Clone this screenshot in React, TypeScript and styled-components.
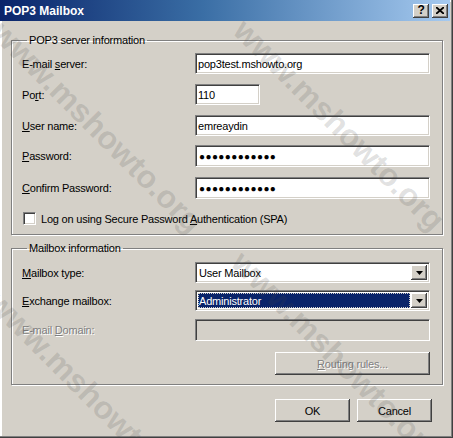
import React from 'react'
import styled, { createGlobalStyle, css } from 'styled-components'

const GlobalStyle = createGlobalStyle`
  html, body {
    margin: 0;
    padding: 0;
    background: #d4d0c8;
  }
  body {
    font-family: 'Liberation Sans', Arial, sans-serif;
    font-size: 11px;
    color: #000;
  }
`

const face = '#d4d0c8'
const shadow = '#808080'
const dark = '#404040'

const raised = css`
  background: ${face};
  border: 0;
  box-shadow: inset -1px -1px 0 ${dark}, inset 1px 1px 0 #fff, inset -2px -2px 0 ${shadow};
`

const sunken = css`
  box-sizing: border-box;
  border-top: 1px solid ${shadow};
  border-left: 1px solid ${shadow};
  border-right: 1px solid #fff;
  border-bottom: 1px solid #fff;
  box-shadow: inset 1px 1px 0 ${dark}, inset -1px -1px 0 ${face};
`

const Window = styled.div`
  position: relative;
  width: 453px;
  height: 438px;
  overflow: hidden;
  background: ${face};
  box-sizing: border-box;
  box-shadow: inset -1px -1px 0 ${dark}, inset -2px -2px 0 ${shadow}, inset 2px 2px 0 #fff;
  letter-spacing: -0.2px;
`

const TitleBar = styled.div`
  height: 21px;
  margin-right: 3px;
  padding: 0 2px 0 4px;
  display: flex;
  align-items: center;
  justify-content: space-between;
  background: linear-gradient(to right, #0a246a, #3a6ea5 45%, #a6caf0);
`

const Title = styled.span`
  color: #fff;
  font-weight: bold;
  font-size: 12px;
  letter-spacing: 0;
`

const CaptionButtons = styled.div`
  display: flex;
  gap: 3px;
`

const CaptionButton = styled.div`
  ${raised};
  width: 16px;
  height: 14px;
  display: flex;
  align-items: center;
  justify-content: center;
  font-weight: bold;
  font-size: 12px;
  line-height: 14px;
  padding-bottom: 1px;
  box-sizing: border-box;
`

const Body = styled.div`
  padding: 13px 10px 0 11px;
  display: flex;
  flex-direction: column;
`

const Group = styled.fieldset<{ $padTop: number; $padBottom: number }>`
  margin: 0 0 7px 0;
  width: 432px;
  box-sizing: border-box;
  border: 1px solid ${shadow};
  box-shadow: inset 1px 1px 0 #fff, 1px 1px 0 #fff;
  padding: ${p => p.$padTop}px 12px ${p => p.$padBottom}px 10px;
  min-width: 0;
`

const Legend = styled.legend`
  margin-left: 5px;
  padding: 0 2px;
  line-height: 13px;
  font-size: 11px;
`

const FieldGrid = styled.div<{ $rows: string }>`
  display: grid;
  grid-template-columns: 173px 235px;
  grid-template-rows: ${p => p.$rows};
  align-items: center;
`

const Spacer = styled.div`
  grid-column: 1 / 3;
`

const Label = styled.label<{ $disabled?: boolean }>`
  font-size: 11px;
  ${p =>
    p.$disabled &&
    css`
      color: ${shadow};
      text-shadow: 1px 1px 0 #fff;
    `}
`

const Key = styled.span`
  text-decoration: underline;
  text-underline-offset: 1px;
`

const TextBox = styled.div<{ $width?: number; $disabled?: boolean }>`
  ${sunken};
  width: ${p => (p.$width ? `${p.$width}px` : '100%')};
  height: 100%;
  background: ${p => (p.$disabled ? face : '#fff')};
  padding: 0 2px;
  display: flex;
  align-items: center;
  font-size: 11px;
`

const Dots = styled.span`
  font-size: 10px;
  letter-spacing: 0.4px;
  padding: 1px 0 0 1px;
`

const Combo = styled.div`
  ${sunken};
  height: 21px;
  background: #fff;
  padding: 2px;
  display: flex;
  align-items: stretch;
  font-size: 11px;
`

const ComboText = styled.div<{ $selected?: boolean }>`
  flex: 1;
  display: flex;
  align-items: center;
  padding-left: 1px;
  margin-right: 1px;
  ${p =>
    p.$selected &&
    css`
      background: #0a246a;
      color: #fff;
      outline: 1px dotted #d4d0c8;
      outline-offset: -1px;
    `}
`

const DropButton = styled.div`
  ${raised};
  width: 16px;
  display: flex;
  align-items: center;
  justify-content: center;
`

const CheckRow = styled.div`
  display: flex;
  align-items: center;
  gap: 5px;
  height: 13px;
  margin-top: 13px;
  padding-left: 1px;
  font-size: 11px;
`

const CheckBox = styled.span`
  ${sunken};
  width: 13px;
  height: 13px;
  background: #fff;
  display: inline-block;
`

const PushButton = styled.button<{ $width: number; $disabled?: boolean }>`
  ${raised};
  width: ${p => p.$width}px;
  height: 23px;
  font-family: inherit;
  font-size: 11px;
  letter-spacing: -0.2px;
  padding: 0;
  color: ${p => (p.$disabled ? shadow : '#000')};
  text-shadow: ${p => (p.$disabled ? '1px 1px 0 #fff' : 'none')};
`

const RoutingCell = styled.div`
  grid-column: 2;
  display: flex;
  justify-content: flex-end;
`

const Footer = styled.div`
  display: flex;
  justify-content: flex-end;
  gap: 7px;
  margin-top: 7px;
  padding-right: 11px;
`

const Watermark = styled.span<{ $x: number; $y: number }>`
  position: absolute;
  left: ${p => p.$x}px;
  top: ${p => p.$y}px;
  transform-origin: left top;
  transform: rotate(45deg);
  font-family: 'Liberation Sans', Arial, sans-serif;
  font-weight: bold;
  font-size: 32px;
  letter-spacing: 0;
  white-space: nowrap;
  color: rgba(70, 70, 70, 0.17);
  pointer-events: none;
`

const Arrow = () => (
  <svg width='7' height='4' viewBox='0 0 7 4'>
    <path d='M0 0h7L3.5 4z' fill='#000' />
  </svg>
)

const CloseGlyph = () => (
  <svg width='8' height='7' viewBox='0 0 8 7'>
    <path d='M0 0l8 7M8 0L0 7' stroke='#000' strokeWidth='1.8' />
  </svg>
)

const serverRows = [
  { label: <>E-mail <Key>s</Key>erver:</>, value: 'pop3test.mshowto.org' },
  { label: <>Po<Key>r</Key>t:</>, value: '110', width: 65 },
  { label: <><Key>U</Key>ser name:</>, value: 'emreaydin' },
  { label: <><Key>P</Key>assword:</>, value: '●●●●●●●●●●●●', secret: true },
  { label: <><Key>C</Key>onfirm Password:</>, value: '●●●●●●●●●●●●', secret: true },
]

const watermarks = [
  { x: 10, y: 14 },
  { x: 252, y: 12 },
  { x: 250, y: 244 },
  { x: 6, y: 284 },
]

export default function App() {
  return (
    <>
      <GlobalStyle />
      <Window>
        <TitleBar>
          <Title>POP3 Mailbox</Title>
          <CaptionButtons>
            <CaptionButton>?</CaptionButton>
            <CaptionButton>
              <CloseGlyph />
            </CaptionButton>
          </CaptionButtons>
        </TitleBar>
        <Body>
          <Group $padTop={6} $padBottom={9}>
            <Legend>POP3 server information</Legend>
            <FieldGrid $rows='21px 10px 21px 10px 21px 9px 22px 10px 22px'>
              {serverRows.map((r, i) => (
                <React.Fragment key={i}>
                  {i > 0 && <Spacer />}
                  <Label>{r.label}</Label>
                  <TextBox $width={r.width}>
                    {r.secret ? <Dots>{r.value}</Dots> : r.value}
                  </TextBox>
                </React.Fragment>
              ))}
            </FieldGrid>
            <CheckRow>
              <CheckBox />
              <span>
                Log on using Secure Password <Key>A</Key>uthentication (SPA)
              </span>
            </CheckRow>
          </Group>
          <Group $padTop={7} $padBottom={9}>
            <Legend>Mailbox information</Legend>
            <FieldGrid $rows='21px 7px 21px 8px 22px 11px 23px'>
              <Label>
                <Key>M</Key>ailbox type:
              </Label>
              <Combo>
                <ComboText>User Mailbox</ComboText>
                <DropButton>
                  <Arrow />
                </DropButton>
              </Combo>
              <Spacer />
              <Label>
                <Key>E</Key>xchange mailbox:
              </Label>
              <Combo>
                <ComboText $selected>Administrator</ComboText>
                <DropButton>
                  <Arrow />
                </DropButton>
              </Combo>
              <Spacer />
              <Label $disabled>
                E-mail <Key>D</Key>omain:
              </Label>
              <TextBox $disabled />
              <Spacer />
              <RoutingCell>
                <PushButton $width={155} $disabled>
                  <Key>R</Key>outing rules...
                </PushButton>
              </RoutingCell>
            </FieldGrid>
          </Group>
          <Footer>
            <PushButton $width={75}>OK</PushButton>
            <PushButton $width={75}>Cancel</PushButton>
          </Footer>
        </Body>
        {watermarks.map((w, i) => (
          <Watermark key={i} $x={w.x} $y={w.y}>
            www.mshowto.org
          </Watermark>
        ))}
      </Window>
    </>
  )
}
